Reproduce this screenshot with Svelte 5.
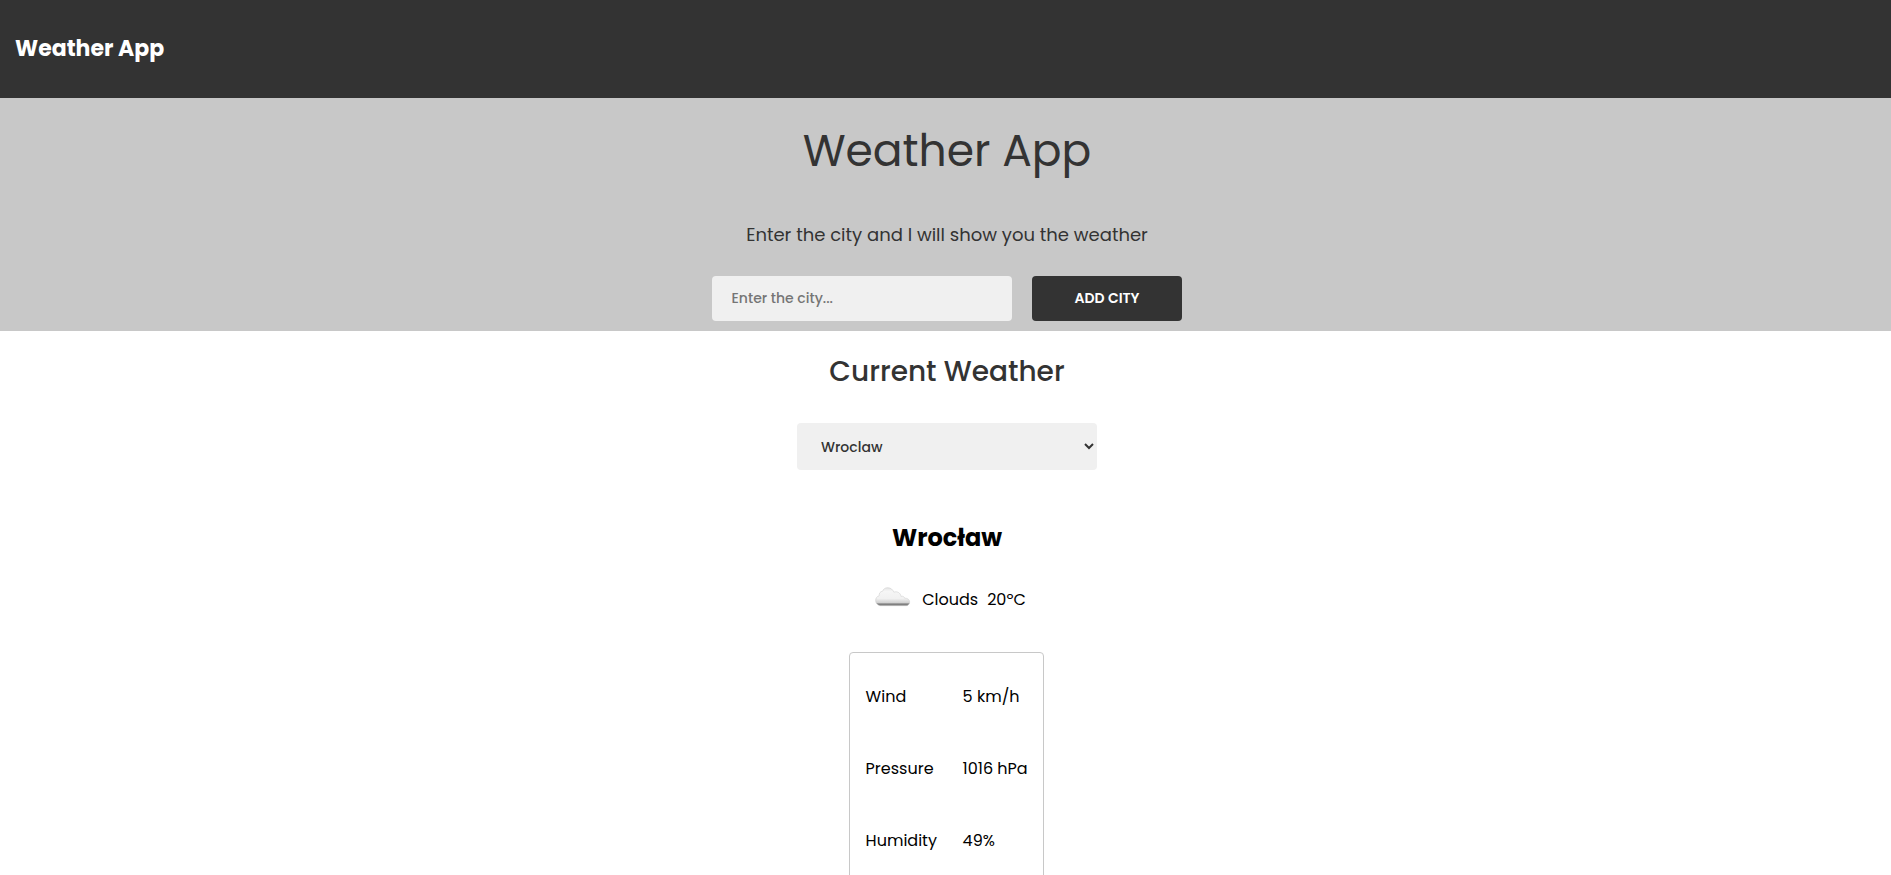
<script>
  const cities = ['Wroclaw'];
  const details = [
    { label: 'Wind', value: '5 km/h' },
    { label: 'Pressure', value: '1016 hPa' },
    { label: 'Humidity', value: '49%' }
  ];
  let selected = $state('Wroclaw');
  let city = $state('');
</script>

<div class="page">
  <nav><span class="logo">Weather App</span></nav>

  <header>
    <h1>Weather App</h1>
    <p class="lead">Enter the city and I will show you the weather</p>
    <form onsubmit={(e) => e.preventDefault()}>
      <input type="text" placeholder="Enter the city..." bind:value={city} />
      <button type="submit">ADD CITY</button>
    </form>
  </header>

  <main>
    <h2>Current Weather</h2>
    <select bind:value={selected}>
      {#each cities as name}<option value={name}>{name}</option>{/each}
    </select>

    <h3>Wrocław</h3>
    <div class="summary">
      <svg class="cloud" viewBox="0 0 36 20" width="36" height="20" aria-hidden="true">
        <defs>
          <linearGradient id="cloudFill" x1="0" y1="0" x2="0" y2="1">
            <stop offset="0" stop-color="#e4e4e4" />
            <stop offset="0.2" stop-color="#f6f6f6" />
            <stop offset="0.6" stop-color="#f1f1f1" />
            <stop offset="0.84" stop-color="#d0d0d0" />
            <stop offset="0.9" stop-color="#808080" />
            <stop offset="1" stop-color="#808080" />
          </linearGradient>
        </defs>
        <path
          d="M5 18.700C2.400 18 .6 16.200.6 13.600c0-2.400 1.400-4.300 3.600-4.800C3.800 6.200 5.400 4.400 7.500 4.300 8.400 2 10.200.7 12.500.7c3 0 5.400 1.700 6.300 4.500 3.200-1.200 6.700.4 7.200 4.300 1-.5 2.100-.4 2.900.4.4.4.6.8.7 1.300 2.900-.2 5.100 1.400 5.100 3.700 0 2.100-1.300 3.500-3.400 3.800Z"
          fill="url(#cloudFill)" stroke="#c8c8c8" stroke-width="0.5" />
      </svg>
      <span class="condition">Clouds</span>
      <span>20ºC</span>
    </div>

    <dl>
      {#each details as d}
        <div class="row">
          <dt>{d.label}</dt>
          <dd>{d.value}</dd>
        </div>
      {/each}
    </dl>
  </main>
</div>

<style>
  :global(body) { margin: 0; background: #fff; }

  .page {
    height: 100vh;
    overflow: hidden;
    font-family: Poppins, Inter, sans-serif;
    color: #000;
  }
  .page * { box-sizing: border-box; }

  nav {
    display: flex;
    align-items: center;
    height: 98px;
    padding: 0 15px 1px;
    background: #333;
  }
  .logo { font-size: 22px; line-height: 33px; font-weight: 700; color: #fff; }

  header, main {
    display: flex;
    flex-direction: column;
    align-items: center;
    padding: 20px 0 0 3px;
  }
  header { height: 233px; background: #c8c8c8; color: #333; }

  h1 { margin: 0; font-size: 44px; line-height: 66px; font-weight: 400; }
  .lead { margin: 37px 0 28px; font-size: 18px; line-height: 27px; font-weight: 400; }

  form { display: flex; gap: 20px; }
  input, button, select {
    margin: 0;
    border: 0;
    border-radius: 4px;
    font-family: inherit;
    font-size: 14px;
    font-weight: 500;
  }
  input { width: 300px; height: 45px; padding: 0 19.5px; background: #f0f0f0; }
  input::placeholder { color: #757575; }
  button { width: 150px; height: 45px; padding: 0; background: #333; color: #fff; font-weight: 600; }

  h2 { margin: 0 0 30px; font-size: 28px; line-height: 42px; font-weight: 500; color: #333; }
  select {
    width: 300px;
    height: 47px;
    padding: 0 0 0 20px;
    background-color: #f0f0f0;
    color: #333;
  }

  h3 { margin: 50px 0 32px; font-size: 24px; line-height: 36px; font-weight: 700; }

  .summary { display: flex; height: 24px; padding-left: 7px; font-size: 16px; line-height: 24px; }
  .cloud { display: block; margin: -1px 11px 0 0; }
  .condition { margin-right: 9px; }

  dl {
    flex: none;
    width: 195px;
    height: 300px;
    margin: 40px 0 0 -1px;
    padding: 8px 15px 8px 15.600px;
    border: 1px solid #c8c8c8;
    border-radius: 4px;
    font-size: 16px;
    line-height: 24px;
  }
  .row { display: grid; grid-template-columns: 97px 1fr; height: 72px; align-items: center; white-space: nowrap; }
  dd { margin: 0; }
</style>
